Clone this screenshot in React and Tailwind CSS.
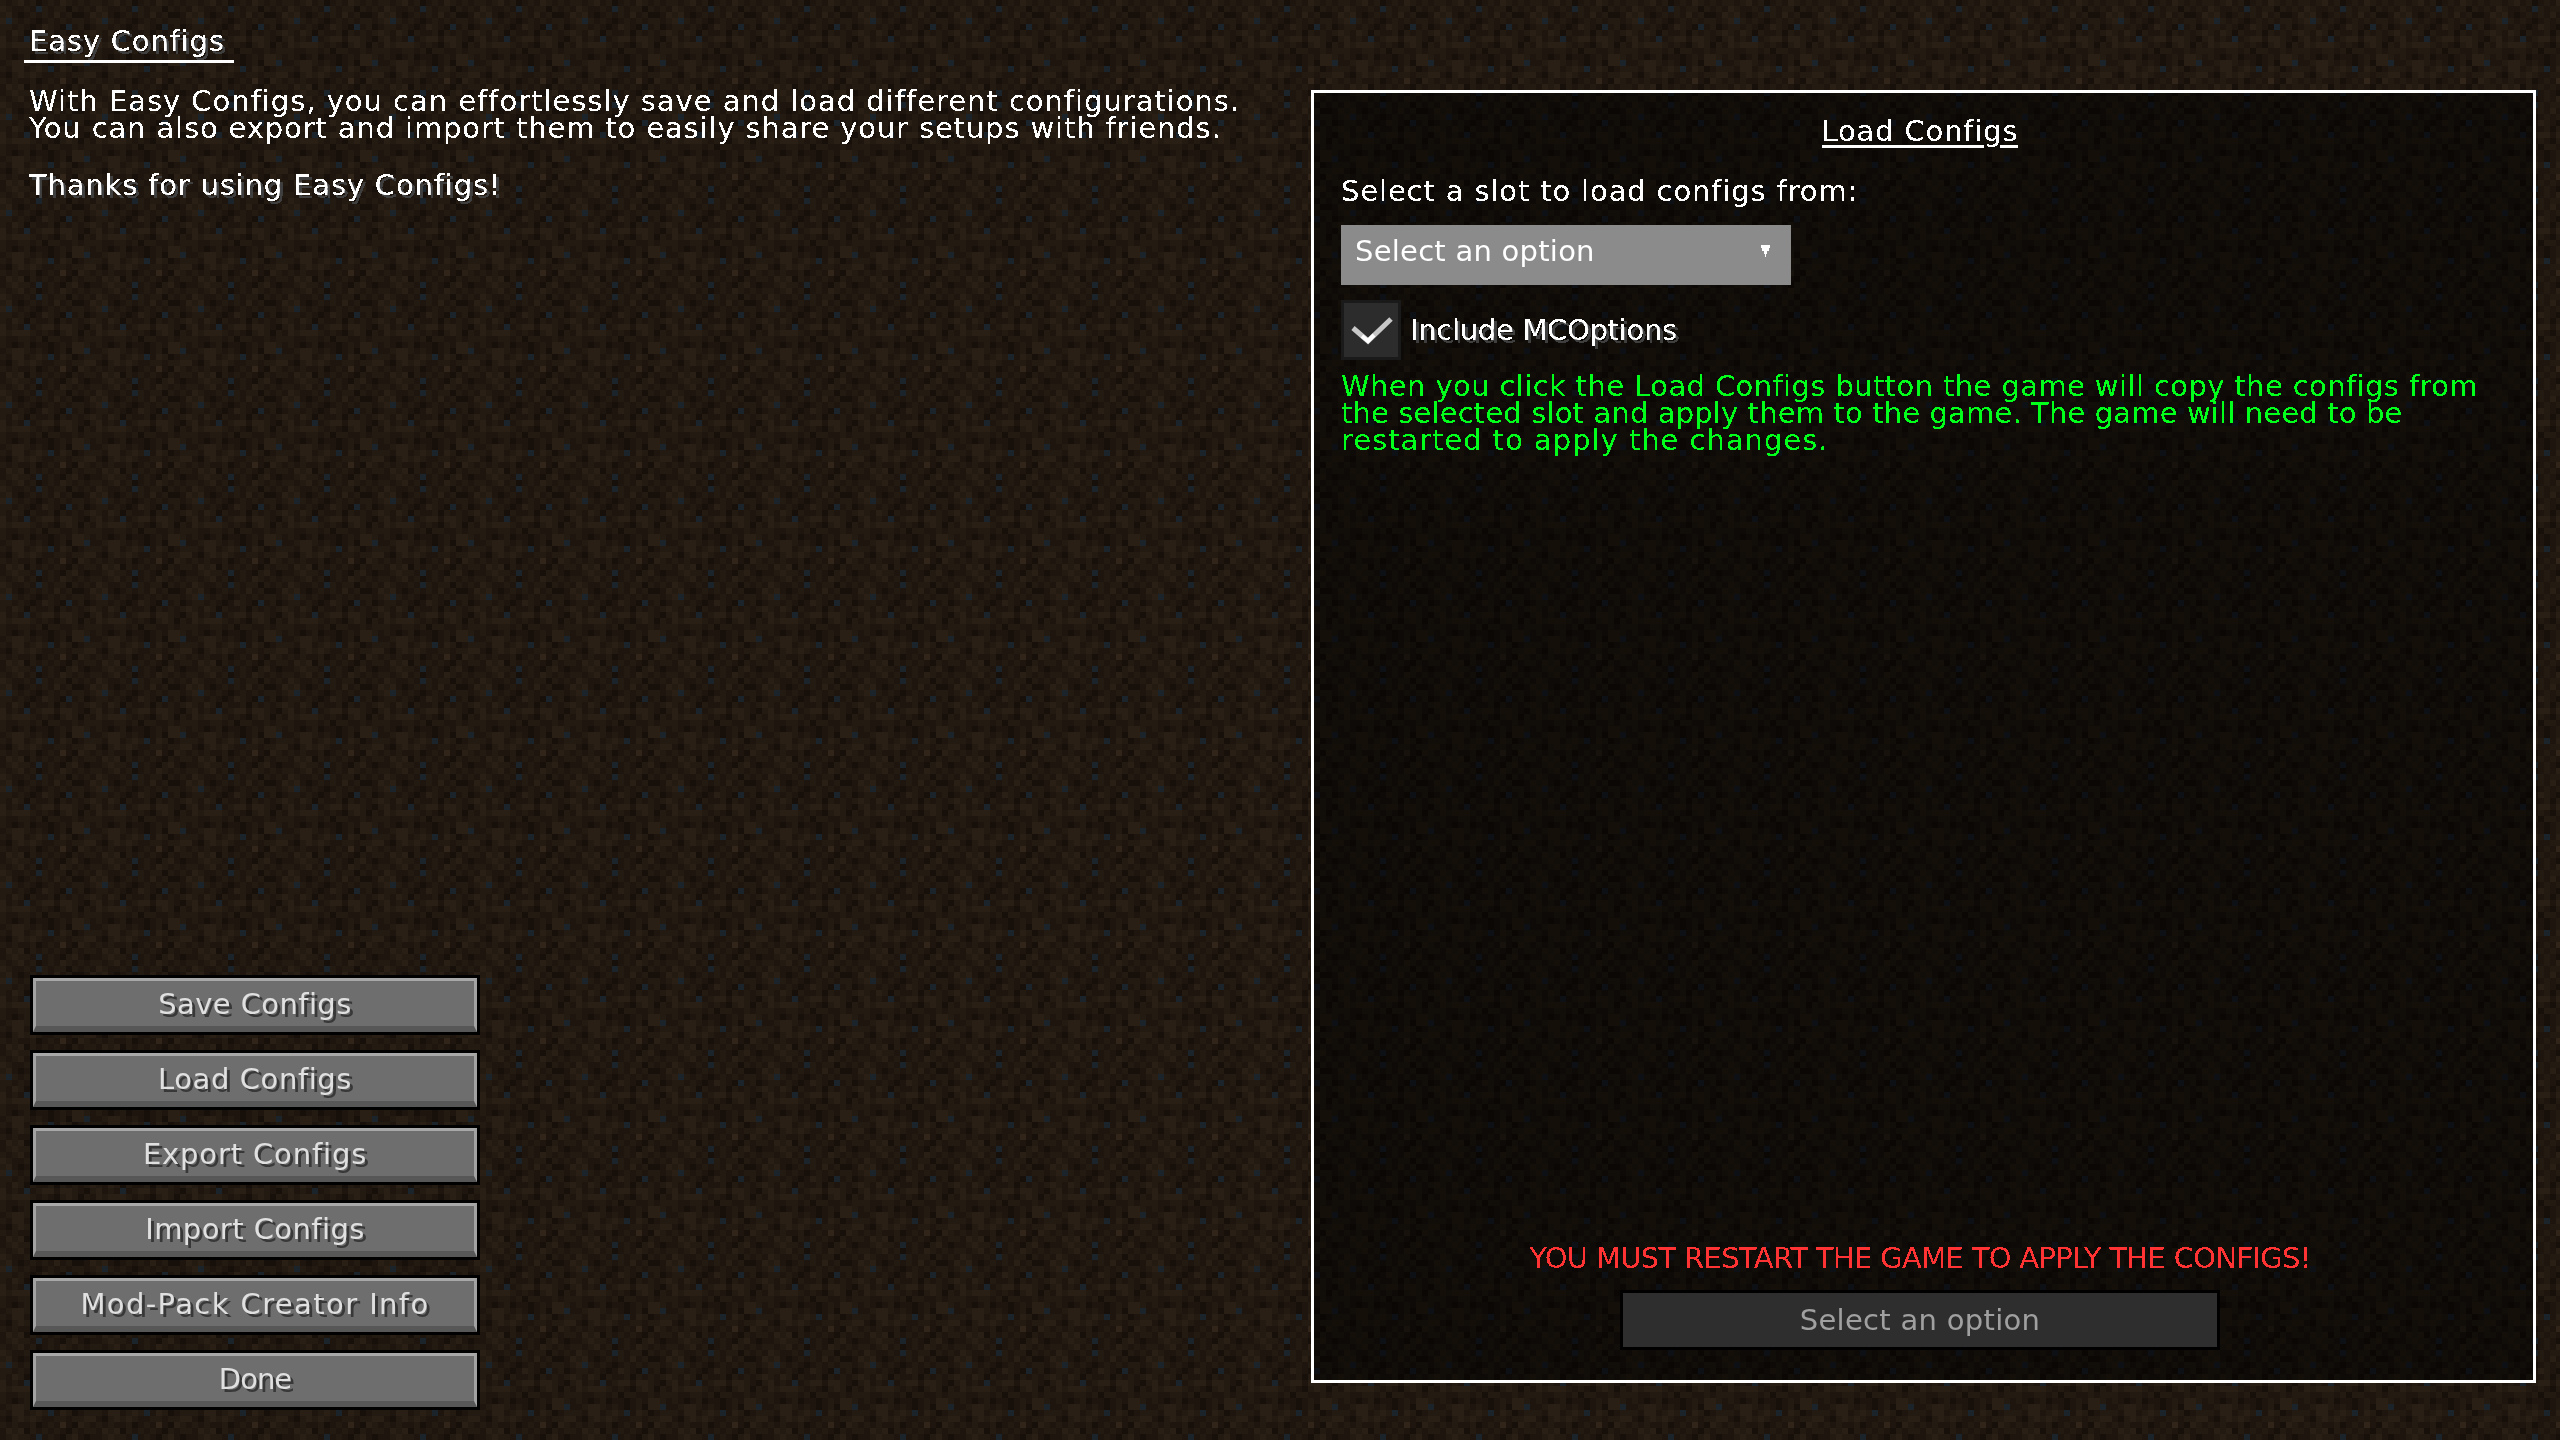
const COLORS = {
  a: "#170f0a",
  b: "#1d150e",
  c: "#231a12",
  d: "#2a1f15",
  e: "#31251a",
  x: "#1b232b",
};

// background block texture, 16 cells repeated every 96px
const TILE = [
  "cbcdbcabcbdcbcbc",
  "dcbbcbxcbccacbcb",
  "cdbabcbcbdbcaabd",
  "dxcbcbabcbcbccbc",
  "ccbcbabdcbaxbcab",
  "cbdcacbbcacbcbcd",
  "dbcbxbcddbddcbac",
  "dcdddcbcbacdcacb",
  "cbbccbcaccbbcbcc",
  "cbabcabbabcbddcb",
  "bcddcbcbabcaddxb",
  "cbddbcdcxbdcabcc",
  "bacdcdcbbccbccdd",
  "cbcbbcabcbebadcb",
  "bdcdacbcbcbacbcc",
  "bcdccbxbcbacdbab",
];

const BUTTONS = [
  { label: "Save Configs", tracking: "tracking-[0.4px]" },
  { label: "Load Configs", tracking: "tracking-[0.6px]" },
  { label: "Export Configs", tracking: "tracking-[0.85px]" },
  { label: "Import Configs", tracking: "tracking-[0.43px]" },
  { label: "Mod-Pack Creator Info", tracking: "tracking-[1.4px]" },
  { label: "Done", tracking: "tracking-[-1px]" },
];

const SHADOW = "[text-shadow:3px_3px_0_#3f3f3f]";

function Background() {
  return (
    <svg className="absolute inset-0 h-full w-full" aria-hidden="true">
      <defs>
        <pattern id="dirt" width="96" height="96" patternUnits="userSpaceOnUse" shapeRendering="crispEdges">
          {TILE.map((row, y) =>
            row.split("").map((c, x) => (
              <rect key={`${x}-${y}`} x={x * 6} y={y * 6} width="6" height="6" fill={COLORS[c]} />
            ))
          )}
        </pattern>
        <filter id="crisp" colorInterpolationFilters="sRGB">
          <feComponentTransfer>
            <feFuncA type="discrete" tableValues="0 1" />
          </feComponentTransfer>
        </filter>
      </defs>
      <rect width="100%" height="100%" fill="url(#dirt)" />
    </svg>
  );
}

function MenuButton({ label, tracking }) {
  return (
    <div className="h-[60px] w-[450px] border-[3px] border-black">
      <div className="flex h-full items-center justify-center border-x-[3px] border-t-[3px] border-b-[6px] border-x-[#a2a2a2] border-t-[#a8a8a8] border-b-[#575757] bg-[#6e6e6e]">
        <span className={`pt-[2px] leading-[27px] whitespace-nowrap text-[#e0e0e0] [text-shadow:3px_3px_0_#383838] ${tracking}`}>
          {label}
        </span>
      </div>
    </div>
  );
}

export default function App() {
  return (
    <div className="relative h-[1440px] w-[2560px] overflow-hidden font-['DejaVu_Sans',sans-serif] text-[29px] leading-[27px] text-white">
      <Background />
      <div className="relative flex h-full">
        <div className="flex w-[1311px] flex-col pt-[28px] pb-[30px] pl-[24px] [filter:url(#crisp)]">
          <h1 className={`pl-[5px] text-[29px] font-normal tracking-[0.83px] ${SHADOW}`}>Easy Configs</h1>
          <div className="mt-[5px] h-[3px] w-[210px] bg-white" />
          <div className="mt-[25px] pl-[5px] whitespace-nowrap">
            <p className="tracking-[0.97px]">With Easy Configs, you can effortlessly save and load different configurations.</p>
            <p className="tracking-[0.86px]">You can also export and import them to easily share your setups with friends.</p>
            <p className={`mt-[30px] tracking-[0.83px] ${SHADOW}`}>Thanks for using Easy Configs!</p>
          </div>
          <div className="mt-auto ml-[6px] flex flex-col gap-[15px]">
            {BUTTONS.map((b) => (
              <MenuButton key={b.label} label={b.label} tracking={b.tracking} />
            ))}
          </div>
        </div>

        <div className="mt-[90px] mb-[57px] w-[1225px] border-[3px] border-white bg-black/50">
          <div className="flex h-full flex-col pt-[25px] pb-[30px] pl-[27px] [filter:url(#crisp)]">
            <h2 className="pr-[34px] text-center font-normal tracking-[0.83px] underline decoration-[3px] underline-offset-[4px]">Load Configs</h2>
            <p className="mt-[33px] tracking-[0.86px]">Select a slot to load configs from:</p>

            <div className="mt-[20px] flex h-[60px] w-[450px] justify-between bg-[#8b8b8b] pt-[13px] pr-[21px] pl-[14px]">
              <span className="tracking-[0.25px]">Select an option</span>
              <svg width="9" height="12" viewBox="0 0 9 12" className="mt-[7px]" shapeRendering="crispEdges">
                <path d="M0 0h9v3H8v3H6v3H5v3H4V9H3V6H1V3H0z" fill="#fff" />
              </svg>
            </div>

            <div className="mt-[15px] flex items-center gap-[9px]">
              <div className="h-[60px] w-[60px] border-[3px] border-[#1a1a1a] bg-[#2c2c2c]">
                <svg width="54" height="54" viewBox="0 0 54 54">
                  <path d="M9 25l15 13L47 16" fill="none" stroke="#c8c8c8" strokeWidth="5" />
                  <path d="M18 33l6 5 6-6" fill="none" stroke="#ffffff" strokeWidth="4" />
                </svg>
              </div>
              <span className={`tracking-[-0.3px] ${SHADOW}`}>Include MCOptions</span>
            </div>

            <div className="mt-[13px] whitespace-nowrap text-[#00ff1a]">
              <p className="tracking-[0.39px]">When you click the Load Configs button the game will copy the configs from</p>
              <p className="tracking-[0.14px]">the selected slot and apply them to the game. The game will need to be</p>
              <p className="tracking-[0.97px]">restarted to apply the changes.</p>
            </div>

            <div className="mt-auto flex flex-col items-center pr-[34px]">
              <p className="tracking-[-0.68px] whitespace-nowrap text-[#ff3333]">YOU MUST RESTART THE GAME TO APPLY THE CONFIGS!</p>
              <div className="mt-[18px] flex h-[60px] w-[600px] items-center justify-center border-[3px] border-black bg-[#2e2e2e] tracking-[0.3px] text-[#a0a0a0]">
                Select an option
              </div>
            </div>
          </div>
        </div>
      </div>
    </div>
  );
}
